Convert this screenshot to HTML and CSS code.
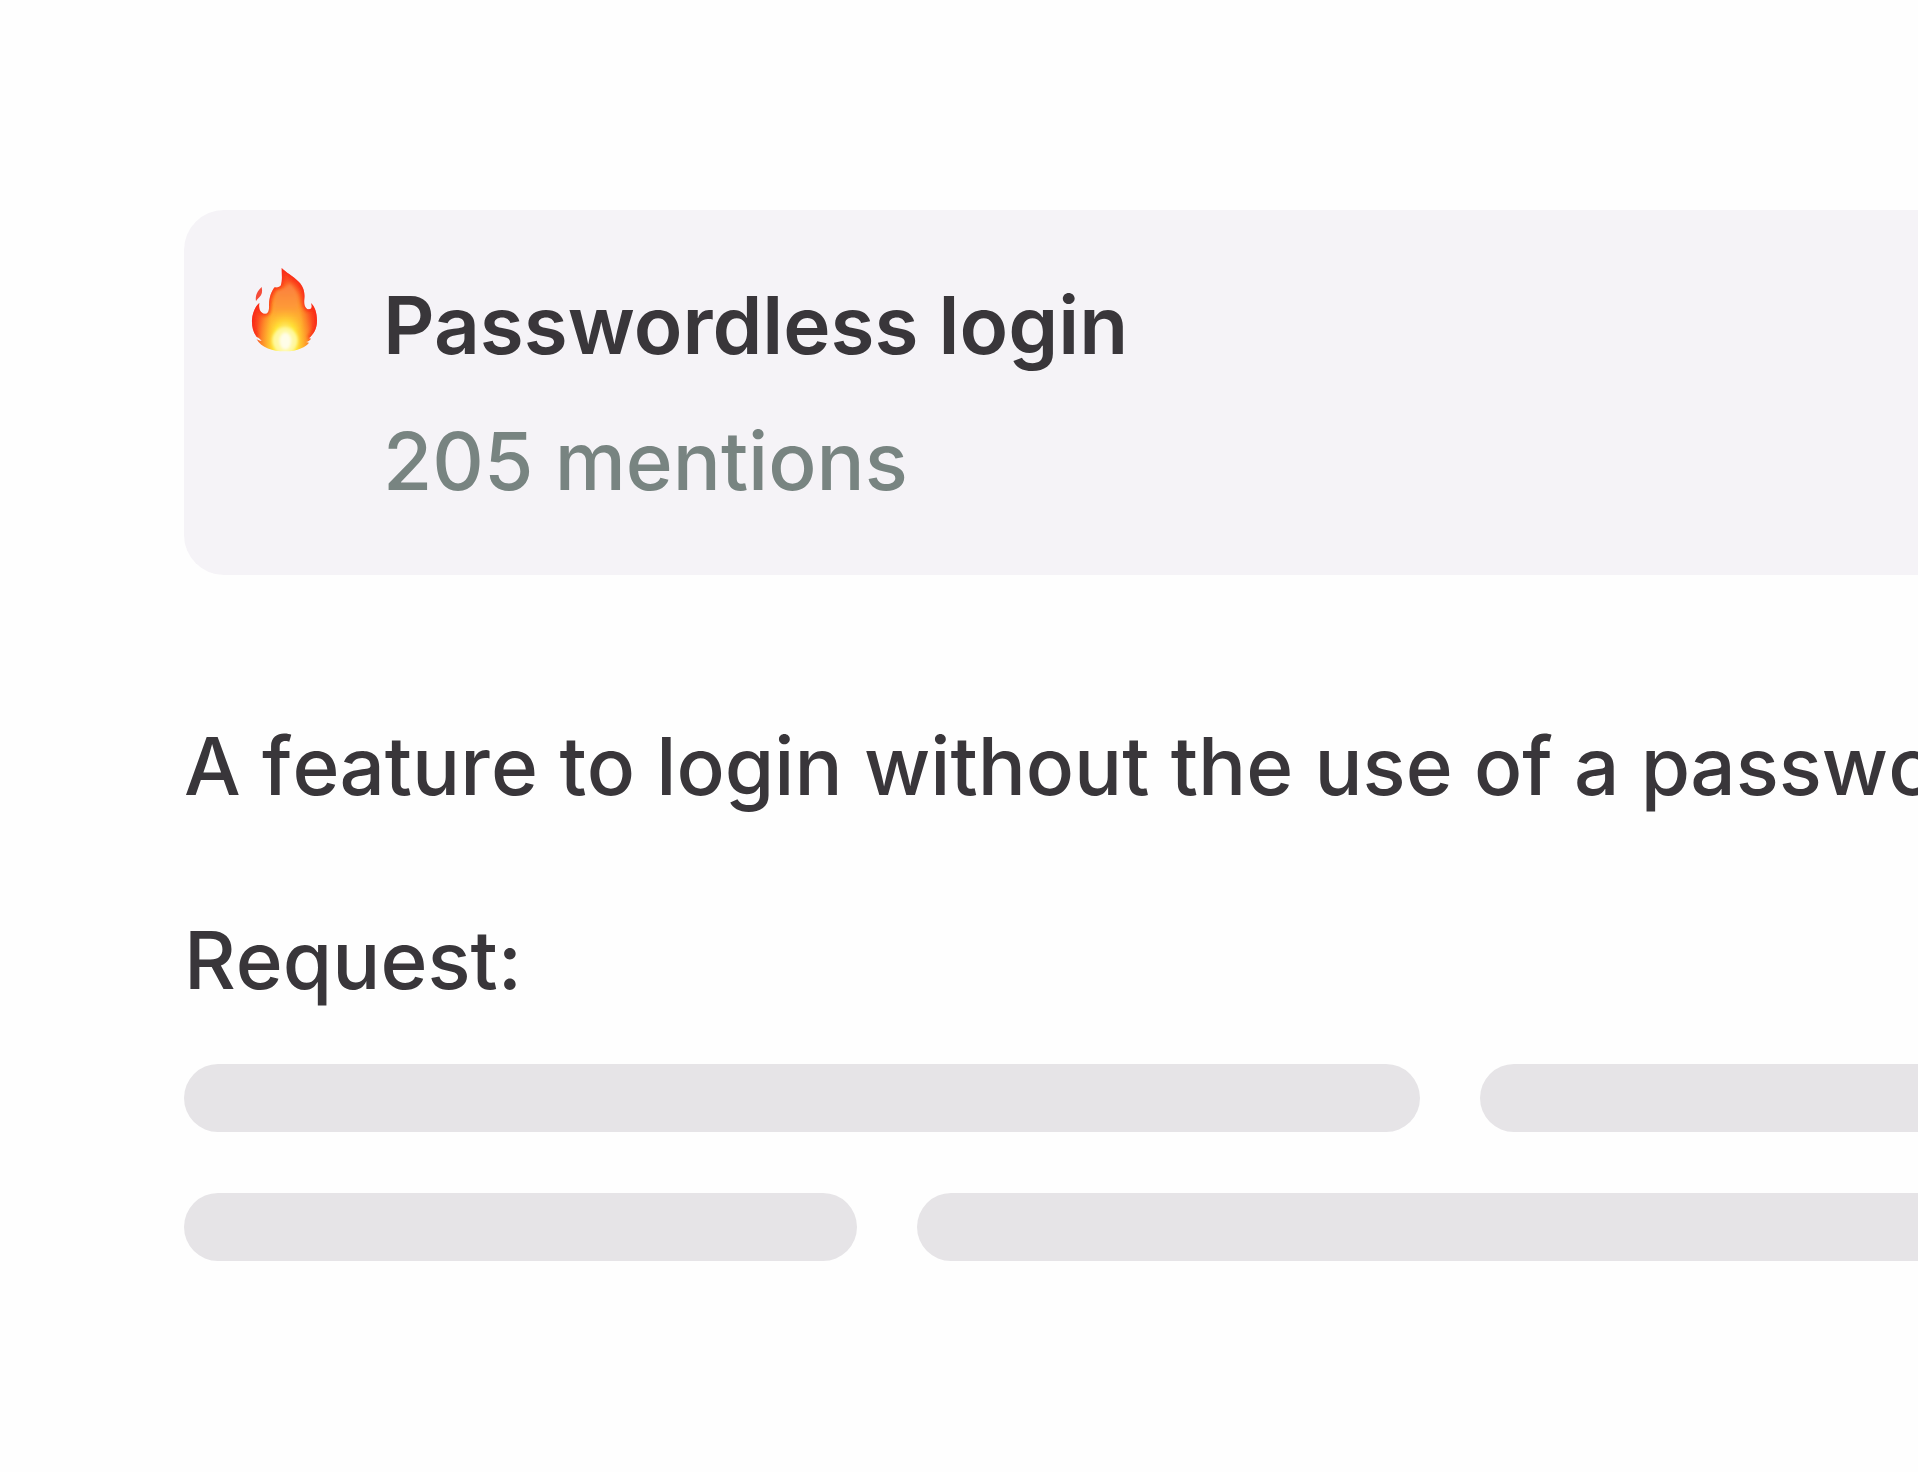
FILE: index.html
```
<!DOCTYPE html>
<html lang="en">

    <head>
        <meta charset="UTF-8">
        <meta name="viewport" content="width=device-width, initial-scale=1.0">
        <title>Passwordless login</title>
        <link rel="stylesheet" href="styles.css">
    </head>

    <body>
        <main class="feature">
            <header class="card">
                <svg class="card-icon" viewBox="60 50 204 255" role="img" aria-label="Fire">
                    <defs>
                        <radialGradient id="flame" gradientUnits="userSpaceOnUse" cx="0" cy="0" r="1"
                            gradientTransform="translate(165 284) scale(104 236)">
                            <stop offset="0" stop-color="#fffbe0" />
                            <stop offset="0.12" stop-color="#fffbb0" />
                            <stop offset="0.32" stop-color="#ffe838" />
                            <stop offset="0.5" stop-color="#ffb92e" />
                            <stop offset="0.68" stop-color="#fd8428" />
                            <stop offset="0.84" stop-color="#fb4a20" />
                            <stop offset="1" stop-color="#f8301c" />
                        </radialGradient>
                        <linearGradient id="core" x1="0" y1="0" x2="0" y2="1">
                            <stop offset="0" stop-color="#fb7c40" />
                            <stop offset="0.45" stop-color="#fe9a36" />
                            <stop offset="0.85" stop-color="#ffc02c" stop-opacity="0" />
                        </linearGradient>
                        <filter id="soft" x="-30%" y="-30%" width="160%" height="160%">
                            <feGaussianBlur stdDeviation="5" />
                        </filter>
                        <clipPath id="outline">
                            <path id="shape" d="M155 53C166 65 190 78 206 94C221 109 225 126 223 146C221 164 226 176 237 177C246 177 247 168 243 158C254 168 261 187 261 211C261 236 251 250 237 264L243 265C239 271 234 274 228 275L237 277C229 289 203 303 165 303C127 303 95 293 79 265C84 269 89 271 95 271C90 267 88 263 80 260C69 244 65 229 66 207C67 188 76 168 88 158C86 171 88 185 101 190C114 193 118 182 117 164C117 142 124 123 134 111C140 112 148 110 152 106C158 91 155 71 155 53Z" />
                        </clipPath>
                    </defs>
                    <use href="#shape" fill="url(#flame)" />
                    <g clip-path="url(#outline)">
                        <path d="M178 98C169 113 157 116 142 122C132 141 131 169 126 197C121 225 125 245 133 263L200 262C212 243 218 221 213 199C207 190 205 176 204 154C206 133 198 117 178 98Z" fill="url(#core)" filter="url(#soft)" />
                        <path d="M155 53C166 65 190 78 206 94C221 109 225 126 223 146C221 164 226 176 237 177C246 177 247 168 243 158C254 168 261 187 261 211C261 236 251 250 237 264M80 260C69 244 65 229 66 207C67 188 76 168 88 158C86 171 88 185 101 190C114 193 118 182 117 164C117 142 124 123 134 111C140 112 148 110 152 106C158 91 155 71 155 53" fill="none" stroke="#fa2414" stroke-width="13" stroke-opacity="0.65" filter="url(#soft)" />
                        <ellipse cx="165" cy="270" rx="38" ry="38" fill="#fff8a0" filter="url(#soft)" />
                        <ellipse cx="166" cy="272" rx="18" ry="26" fill="#fffde8" filter="url(#soft)" />
                    </g>
                    <path d="M95 110C98 124 96 133 88 141C84 145 80 149 78 153C75 134 83 121 95 110Z" fill="#f54b39" />
                </svg>
                <div class="card-text">
                    <h1>Passwordless login</h1>
                    <p class="mentions">205 mentions</p>
                </div>
            </header>

            <section class="details">
                <p>A feature to login without the use of a password</p>
                <h2>Request:</h2>
            </section>

            <!-- Placeholder lines -->
            <div class="placeholder" aria-hidden="true">
                <div class="row row-first">
                    <span class="bar"></span>
                    <span class="bar bar-rest"></span>
                </div>
                <div class="row row-second">
                    <span class="bar"></span>
                    <span class="bar bar-rest"></span>
                </div>
            </div>
        </main>
    </body>

</html>
```

FILE: styles.css
```
* {
    box-sizing: border-box;
}

body {
    margin: 0;
    background: #fefefe;
    color: #39363a;
    font-family: Inter, 'Liberation Sans', sans-serif;
    font-size: 80px;
    line-height: 136px;
    overflow-x: hidden;
}

h1,
h2,
p {
    margin: 0;
    font-size: inherit;
    font-weight: 500;
    font-kerning: none;
    white-space: nowrap;
}

/* Content runs off the right edge of the window */
.feature {
    padding: 210px 0 210px 184px;
    overflow: hidden;
}

.card {
    display: flex;
    align-items: flex-start;
    gap: 65px;
    padding: 47px 66px 46px;
    background: #f5f3f7;
    border-radius: 40px 0 0 40px;
}

.card-icon {
    flex: none;
    width: 68px;
    height: 85px;
    margin-top: 10px;
}

.card h1 {
    font-weight: 600;
    font-kerning: auto;
}

.mentions {
    color: #788481;
}

.details {
    display: flex;
    flex-direction: column;
    gap: 58px;
    margin-top: 123px;
}

.placeholder {
    display: flex;
    flex-direction: column;
    gap: 61px;
    margin-top: 36px;
}

.row {
    display: grid;
    gap: 60px;
}

.row-first {
    grid-template-columns: 1236px 1fr;
}

.row-second {
    grid-template-columns: 673px 1fr;
}

.bar {
    height: 68px;
    background: #e6e4e7;
    border-radius: 34px;
}

.bar-rest {
    border-radius: 34px 0 0 34px;
}
```
